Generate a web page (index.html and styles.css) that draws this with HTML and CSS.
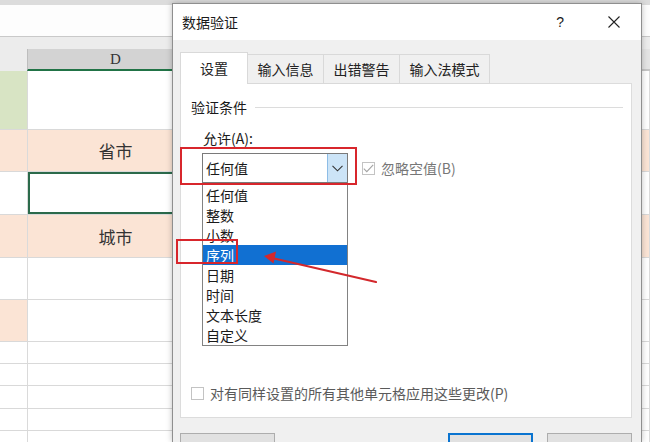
FILE: index.html
```html
<!DOCTYPE html>
<html lang="zh-CN">

<head>
    <meta charset="UTF-8">
    <meta name="viewport" content="width=device-width, initial-scale=1.0">
    <title>数据验证</title>
    <link rel="stylesheet" href="styles.css">
</head>

<body>
    <div class="sheet">
        <div class="sheet-top"></div>
        <div class="formula-bar"></div>
        <div class="col-heads">
            <div class="corner"></div>
            <div class="col-head">D</div>
            <div class="col-head next"></div>
        </div>
        <div class="row h59"><div class="row-head green"></div><div class="cell"></div><div class="cell rest"></div></div>
        <div class="row h42 peach"><div class="row-head"></div><div class="cell">省市</div><div class="cell rest"></div></div>
        <div class="row h43"><div class="row-head"></div><div class="cell active"></div><div class="cell rest"></div></div>
        <div class="row h43 peach"><div class="row-head"></div><div class="cell">城市</div><div class="cell rest"></div></div>
        <div class="row h42"><div class="row-head"></div><div class="cell"></div><div class="cell rest"></div></div>
        <div class="row h42"><div class="row-head peach"></div><div class="cell"></div><div class="cell rest"></div></div>
        <div class="row h22"><div class="row-head"></div><div class="cell"></div><div class="cell rest"></div></div>
        <div class="row h22"><div class="row-head"></div><div class="cell"></div><div class="cell rest"></div></div>
        <div class="row h23"><div class="row-head"></div><div class="cell"></div><div class="cell rest"></div></div>
        <div class="row h22"><div class="row-head"></div><div class="cell"></div><div class="cell rest"></div></div>
        <div class="row h11"><div class="row-head"></div><div class="cell"></div><div class="cell rest"></div></div>
    </div>

    <div class="dialog">
        <div class="dlg-title">
            <span class="dlg-name">数据验证</span>
            <span class="dlg-help">?</span>
            <svg class="dlg-close" width="12" height="12" viewBox="0 0 12 12">
                <path d="M0.5 0.5 L11.5 11.5 M11.5 0.5 L0.5 11.5" stroke="#222" stroke-width="1.1" fill="none" />
            </svg>
        </div>
        <div class="dlg-body">
            <div class="tabs">
                <div class="tab active">设置</div>
                <div class="tab">输入信息</div>
                <div class="tab">出错警告</div>
                <div class="tab">输入法模式</div>
            </div>
            <div class="panel">
                <div class="group-title"><span>验证条件</span><span class="rule"></span></div>
                <div class="field-label">允许(A):</div>
                <div class="allow-row">
                    <div class="combo">
                        <span class="combo-value">任何值</span>
                        <span class="combo-btn">
                            <svg width="11" height="7" viewBox="0 0 11 7">
                                <path d="M0.5 0.8 L5.5 5.8 L10.5 0.8" stroke="#333" stroke-width="1.1" fill="none" />
                            </svg>
                        </span>
                        <ul class="combo-list">
                            <li>任何值</li>
                            <li>整数</li>
                            <li>小数</li>
                            <li class="selected">序列</li>
                            <li>日期</li>
                            <li>时间</li>
                            <li>文本长度</li>
                            <li>自定义</li>
                        </ul>
                    </div>
                    <label class="check disabled">
                        <span class="box">
                            <svg width="11" height="9" viewBox="0 0 11 9">
                                <path d="M0.8 4.6 L3.8 7.6 L10.2 0.8" stroke="#a3a3a3" stroke-width="1.1" fill="none" />
                            </svg>
                        </span>
                        忽略空值(B)
                    </label>
                </div>
                <label class="check apply"><span class="box"></span>对有同样设置的所有其他单元格应用这些更改(P)</label>
            </div>
            <div class="dlg-buttons">
                <button class="btn wide"></button>
                <button class="btn default"></button>
                <button class="btn"></button>
            </div>
        </div>
    </div>

    <!-- red marks drawn over the dialog -->
    <div class="mark mark-combo"></div>
    <div class="mark mark-item"></div>
    <svg class="arrow" width="650" height="442" viewBox="0 0 650 442">
        <path d="M376 282 L272 258" stroke="#d3282c" stroke-width="2.2" fill="none" stroke-linecap="round" />
        <path d="M264 256 L276 251.5 L273.5 263.5 Z" fill="#d3282c" />
    </svg>
</body>

</html>
```

FILE: styles.css
```css
body {
    margin: 0;
    width: 650px;
    height: 442px;
    overflow: hidden;
    position: relative;
    font-family: "Noto Sans CJK SC", sans-serif;
    font-size: 14px;
    color: #1a1a1a;
    background: #fff;
}

/* spreadsheet behind the dialog */
.sheet-top {
    height: 5px;
    background: #dcdcdc;
}

.formula-bar {
    height: 31px;
    background: #fdfdfd;
    border-bottom: 1px solid #c9c9c9;
}

.col-heads {
    display: flex;
    height: 34px;
    background: #ececec;
}

.corner {
    width: 27px;
}

.col-head {
    box-sizing: border-box;
    width: 176px;
    height: 22px;
    margin-top: 12px;
    background: #d3d3d3;
    border-left: 1px solid #bdbdbd;
    border-bottom: 2px solid #217346;
    text-align: center;
    font-family: "Liberation Serif", serif;
    font-size: 15px;
    line-height: 20px;
    color: #333;
}

.col-head.next {
    flex: 1;
    background: #e4e4e4;
    border-bottom-color: #c6c6c6;
}

.row {
    display: flex;
    box-sizing: border-box;
    border-bottom: 1px solid #d9d9d9;
}

.h59 { height: 59px; }
.h43 { height: 43px; }
.h42 { height: 42px; }
.h23 { height: 23px; }
.h22 { height: 22px; }
.h11 { height: 11px; border-bottom: none; }

.row-head {
    width: 27px;
    border-right: 1px solid #dadada;
}

.row-head.green {
    background: #d8e4c4;
}

.peach {
    background: #fbe4d5;
}

.cell {
    box-sizing: border-box;
    width: 176px;
    border-right: 1px solid #dadada;
    text-align: center;
    font-size: 17px;
    color: #333;
    display: flex;
    align-items: center;
    justify-content: center;
}

.cell.rest {
    flex: 1;
}

.cell.active {
    box-shadow: inset 0 0 0 2px #2b6a4b;
}

/* data validation dialog */
.dialog {
    position: absolute;
    left: 172px;
    top: 3px;
    width: 468px;
    height: 438px;
    overflow: hidden;
    background: #f0f0f0;
    border: 1px solid #8f8f8f;
    border-bottom: none;
    box-shadow: 0 0 6px rgba(0, 0, 0, 0.25);
}

.dlg-title {
    display: flex;
    align-items: center;
    height: 36px;
    padding-left: 9px;
    background: #fff;
    font-size: 14px;
    color: #1a1a1a;
}

.dlg-name {
    flex: 1;
}

.dlg-help {
    font-family: "Liberation Sans", sans-serif;
    font-size: 14px;
    margin-right: 44px;
}

.dlg-close {
    margin-right: 21px;
}

.dlg-body {
    padding: 12px 9px 0 7px;
}

.tabs {
    display: flex;
    align-items: flex-end;
    height: 32px;
    margin-bottom: -1px;
    position: relative;
    z-index: 1;
}

.tab {
    box-sizing: border-box;
    height: 30px;
    padding: 0 9.5px;
    line-height: 28px;
    background: #f0f0f0;
    border: 1px solid #d9d9d9;
    margin-left: -1px;
    color: #222;
}

.tab.active {
    height: 32px;
    padding: 0 19px;
    margin-left: 0;
    background: #fff;
    border-bottom: none;
    line-height: 30px;
}

.panel {
    box-sizing: border-box;
    height: 335px;
    background: #fff;
    border: 1px solid #dcdcdc;
    display: flex;
    flex-direction: column;
}

.group-title {
    display: flex;
    align-items: center;
    gap: 8px;
    margin: 13px 8px 0 10px;
    line-height: 20px;
}

.group-title .rule {
    flex: 1;
    height: 1px;
    background: #dcdcdc;
}

.field-label {
    margin: 11px 0 0 22px;
    line-height: 20px;
}

.allow-row {
    display: flex;
    align-items: center;
    margin: 5px 0 0 21px;
    height: 30px;
}

.combo {
    position: relative;
    box-sizing: border-box;
    width: 146px;
    height: 30px;
    border: 1px solid #7a7a7a;
    display: flex;
}

.combo-value {
    flex: 1;
    padding-left: 3px;
    line-height: 28px;
}

.combo-btn {
    width: 19px;
    background: #cce4f7;
    border-left: 1px solid #8ebde6;
    display: flex;
    align-items: center;
    justify-content: center;
}

.combo-list {
    position: absolute;
    left: -1px;
    top: 30px;
    width: 146px;
    box-sizing: border-box;
    margin: 0;
    padding: 0;
    list-style: none;
    background: #fff;
    border: 1px solid #828282;
}

.combo-list li {
    height: 20px;
    line-height: 20px;
    padding-left: 3px;
}

.combo-list li.selected {
    background: #1170d2;
    color: #fff;
}

.check {
    display: flex;
    align-items: center;
    gap: 6px;
    line-height: 20px;
    color: #6e6e6e;
}

.check .box {
    box-sizing: border-box;
    width: 13px;
    height: 13px;
    border: 1px solid #c3c3c3;
    background: #fff;
    display: flex;
    align-items: center;
    justify-content: center;
}

.check.disabled {
    margin-left: 14px;
    color: #777;
}

.check.apply {
    margin: auto 0 14px 10px;
    color: #5a5a5a;
}

.dlg-buttons {
    display: flex;
    gap: 14px;
    margin-top: 15px;
}

.btn {
    width: 85px;
    height: 24px;
    background: #e1e1e1;
    border: 1px solid #adadad;
    padding: 0;
}

.btn.wide {
    width: 95px;
}

.btn.default {
    margin-left: auto;
    border: 2px solid #0a74d0;
}

/* red annotation boxes and arrow */
.mark {
    position: absolute;
    box-sizing: border-box;
    border: 2px solid #d8262c;
}

.mark-combo {
    left: 180px;
    top: 147px;
    width: 177px;
    height: 38px;
}

.mark-item {
    left: 176px;
    top: 239px;
    width: 62px;
    height: 25px;
}

.arrow {
    position: absolute;
    left: 0;
    top: 0;
    pointer-events: none;
}
```
